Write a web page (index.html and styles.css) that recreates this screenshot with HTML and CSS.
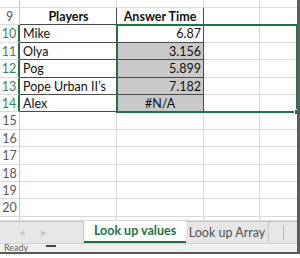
FILE: index.html
```html
<!DOCTYPE html>
<html lang="en">

<head>
    <meta charset="UTF-8">
    <meta name="viewport" content="width=device-width, initial-scale=1.0">
    <title>Look up values</title>
    <link rel="stylesheet" href="styles.css">
</head>

<body>
    <div class="window">
        <div class="sheet">
            <!-- row 8 (cut off) -->
            <div class="cell rh"></div>
            <div class="cell"></div>
            <div class="cell"></div>
            <div class="cell"></div>
            <div class="cell"></div>

            <!-- row 9 -->
            <div class="cell rh">9</div>
            <div class="cell t head t-left">Players</div>
            <div class="cell t head">Answer Time</div>
            <div class="cell"></div>
            <div class="cell"></div>

            <div class="cell rh sel">10</div>
            <div class="cell t t-left">Mike</div>
            <div class="cell t num">6.87</div>
            <div class="cell"></div>
            <div class="cell"></div>

            <div class="cell rh sel">11</div>
            <div class="cell t t-left">Olya</div>
            <div class="cell t num grey">3.156</div>
            <div class="cell"></div>
            <div class="cell"></div>

            <div class="cell rh sel">12</div>
            <div class="cell t t-left">Pog</div>
            <div class="cell t num grey">5.899</div>
            <div class="cell"></div>
            <div class="cell"></div>

            <div class="cell rh sel">13</div>
            <div class="cell t t-left">Pope Urban II’s</div>
            <div class="cell t num grey">7.182</div>
            <div class="cell"></div>
            <div class="cell"></div>

            <div class="cell rh sel">14</div>
            <div class="cell t t-left">Alex</div>
            <div class="cell t err grey">#N/A</div>
            <div class="cell"></div>
            <div class="cell"></div>

            <div class="cell rh">15</div>
            <div class="cell"></div>
            <div class="cell"></div>
            <div class="cell"></div>
            <div class="cell"></div>

            <div class="cell rh">16</div>
            <div class="cell"></div>
            <div class="cell"></div>
            <div class="cell"></div>
            <div class="cell"></div>

            <div class="cell rh">17</div>
            <div class="cell"></div>
            <div class="cell"></div>
            <div class="cell"></div>
            <div class="cell"></div>

            <div class="cell rh">18</div>
            <div class="cell"></div>
            <div class="cell"></div>
            <div class="cell"></div>
            <div class="cell"></div>

            <div class="cell rh">19</div>
            <div class="cell"></div>
            <div class="cell"></div>
            <div class="cell"></div>
            <div class="cell"></div>

            <div class="cell rh">20</div>
            <div class="cell"></div>
            <div class="cell"></div>
            <div class="cell"></div>
            <div class="cell"></div>

            <!-- row 21 (cut off) -->
            <div class="cell rh"></div>
            <div class="cell"></div>
            <div class="cell"></div>
            <div class="cell"></div>
            <div class="cell"></div>

            <div class="selection"><span class="handle"></span></div>
        </div>

        <div class="tabbar">
            <div class="nav">
                <span class="arrow">&#9664;</span>
                <span class="arrow">&#9654;</span>
            </div>
            <div class="tab active">Look up values</div>
            <div class="tab">Look up Array</div>
            <div class="tab-rest"><span class="sep"></span></div>
        </div>

        <div class="status">
            <span>Ready</span>
            <span class="macro"></span>
        </div>
    </div>
</body>

</html>
```

FILE: styles.css
```css
* {
    margin: 0;
    padding: 0;
    box-sizing: border-box;
}

body {
    width: 300px;
    height: 258px;
    background: #fff;
    font-family: Lato, "Liberation Sans", sans-serif;
    overflow: hidden;
}

.window {
    width: 300px;
    height: 254px;
    border-right: 3px solid #5c5c5c;
    border-bottom: 2px solid #5c5c5c;
    display: flex;
    flex-direction: column;
    overflow: hidden;
}

.sheet {
    display: grid;
    grid-template-columns: 20px 97px 87px 56px 39px;
    grid-template-rows: 8px repeat(12, 17.4px) 4.2px;
    position: relative;
}

.cell {
    border-right: 1px solid #dadada;
    border-bottom: 1px solid #dadada;
    font-size: 12.5px;
    color: #111;
    line-height: 17px;
    padding: 0 2px;
    white-space: nowrap;
    overflow: hidden;
}

.rh {
    color: #5a5a5a;
    text-align: center;
    padding: 0;
    border-right: 1px solid #c6c6c6;
}

.rh.sel {
    color: #3f7f5c;
    border-right: 2px solid #217346;
}

/* the bordered table B9:C14 */
.t {
    border-right: 1px solid #4a4a4a;
    border-bottom: 1px solid #4a4a4a;
}

.t-left {
    padding-left: 3px;
}

.head {
    font-weight: bold;
    text-align: center;
}

.num {
    text-align: right;
}

.err {
    text-align: center;
}

.grey {
    background: #c9c9c9;
}

/* overlay on C10:C14, sized by its grid area */
.selection {
    position: absolute;
    grid-column: 3;
    grid-row: 3 / 8;
    top: -1px;
    left: -1px;
    right: -1px;
    bottom: -1px;
    border: 2px solid #217346;
    pointer-events: none;
}

.handle {
    position: absolute;
    right: -4px;
    bottom: -4px;
    width: 6px;
    height: 6px;
    background: #217346;
    border: 1px solid #fff;
}

.tabbar {
    display: flex;
    height: 22px;
    font-size: 12.5px;
    white-space: nowrap;
}

.nav {
    width: 84px;
    background: #e6e6e6;
    border-top: 1px solid #c6c6c6;
    border-right: 1px solid #c6c6c6;
    display: flex;
    align-items: center;
    gap: 17px;
    padding-left: 19px;
}

.arrow {
    color: #c3c3c3;
    font-size: 7px;
}

.tab {
    display: flex;
    align-items: center;
    justify-content: center;
    width: 82px;
    background: #e6e6e6;
    color: #505050;
    border-top: 1px solid #c6c6c6;
}

.tab.active {
    width: 102px;
    background: #fff;
    color: #217346;
    font-weight: bold;
    border-top: none;
    border-bottom: 2px solid #217346;
}

.tab-rest {
    flex: 1;
    background: #e6e6e6;
    border-top: 1px solid #c6c6c6;
    border-left: 1px solid #c6c6c6;
    display: flex;
    align-items: center;
}

.sep {
    width: 1px;
    height: 15px;
    background: #b8b8b8;
    margin-left: 14px;
}

.status {
    flex: 1;
    background: #f0f0f0;
    border-top: 1px solid #d4d4d4;
    display: flex;
    align-items: flex-start;
    gap: 18px;
    padding: 0 4px;
    font-size: 9px;
    color: #666;
    line-height: 8px;
    overflow: hidden;
}

.macro {
    width: 10px;
    height: 5px;
    margin-top: 1px;
    border-top: 2px solid #444;
}
```
